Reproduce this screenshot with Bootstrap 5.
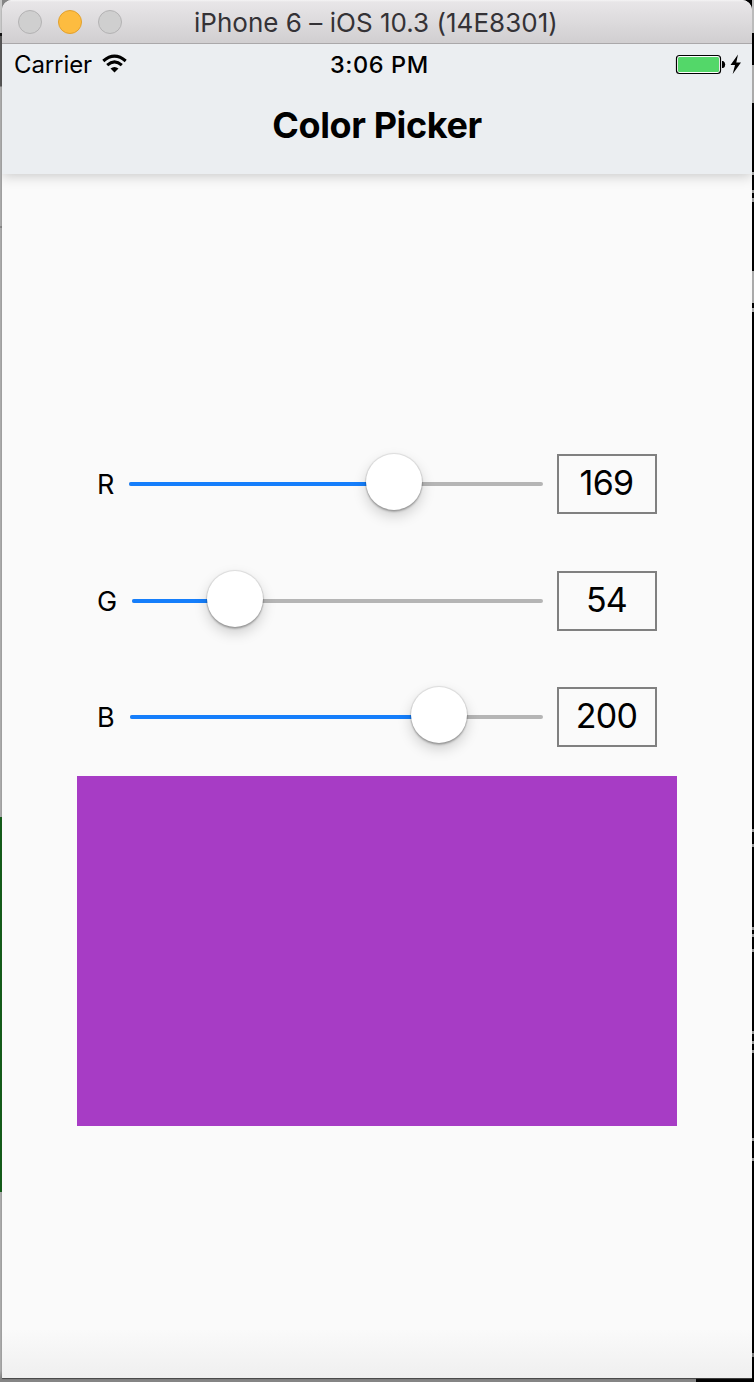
<!DOCTYPE html>
<html lang="en">
<head>
<meta charset="utf-8">
<meta name="viewport" content="width=device-width, initial-scale=1">
<title>Color Picker</title>
<link href="https://cdn.jsdelivr.net/npm/bootstrap@5.3.0/dist/css/bootstrap.min.css" rel="stylesheet">
<style>
  body { font-family: Inter, "Liberation Sans", sans-serif; color: #000; height: 1382px;
    background: linear-gradient(90deg, #858585 696px, #000 696px); line-height: 1; }
  .desk-edge { width: 2px; flex: none; }
  .edge-left { background: linear-gradient(#c8c8c8 33px, #111 33px 36px, #555 36px 86px, #aaa 87px 226px, #888 226px 228px, #aaa 228px 817px, #125c18 817px 1192px, #aaa 1192px 1370px, #858585 1378px); }
  .edge-right { background: linear-gradient(#bbb 33px, #000 33px 65px, #aaa 65px 103px, #000 103px 172px, #aaa 172px 175px, #000 175px 190px, #999 190px 193px, #000 193px 198px, #999 198px 202px, #000 202px 271px, #aaa 271px 303px, #000 303px 308px, #aaa 308px 312px, #000 312px 829px, #999 829px 832px, #000 832px 844px, #999 844px 847px, #000 847px 927px, #999 927px 930px, #000 930px 934px, #999 934px 937px, #000 937px 949px, #999 949px 952px, #000 952px 1031px, #999 1031px 1034px, #000 1034px 1041px, #999 1041px 1044px, #000 1044px 1050px, #999 1050px 1053px, #000 1053px 1138px, #999 1138px 1141px, #000 1141px 1158px, #999 1158px 1161px, #000 1161px 1353px, #777 1353px 1357px, #000 1357px); }
  .sim-window { width: 750px; height: 1378px; border-radius: 10px 10px 0 0; background: linear-gradient(#fafafa 1330px, #efefef 1378px); box-shadow: 0 1px 1px #444; }
  .title-bar { height: 44px; background: linear-gradient(#f5f4f5 0, #e8e6e8 2px, #d1cfd1 42px); border-bottom: 1px solid #aaa8aa; padding-left: 16px; }
  .light { width: 24px; height: 24px; border-radius: 50%; background: #cfcfcf; border: 1px solid #b3b2b3; }
  .light-min { background: #fdbc40; border-color: #e1a02e; }
  .window-name { font-size: 26px; color: #343236; letter-spacing: .02px; margin-left: 72px; padding-top: 3px; white-space: nowrap; }
  .app-head { height: 130px; background: #ebeef1; box-shadow: 0 2px 12px rgba(0,0,0,.2); clip-path: inset(0 0 -30px 0); }
  .status-row { height: 40px; padding: 0 11px 0 12px; }
  .carrier { font-size: 24px; width: 77px; letter-spacing: -.1px; white-space: nowrap; padding-top: 2px; }
  .clock { font-size: 23.5px; font-weight: 500; letter-spacing: .6px; margin-left: 199px; padding-top: 2px; white-space: nowrap; }
  .app-title { font-size: 36px; font-weight: 700; letter-spacing: -.4px; height: 84px; }
  .picker { padding: 280px 95px 0 95px; }
  .channel { height: 60px; margin-bottom: 57px; }
  .channel + .channel { margin-bottom: 56px; }
  .channel:nth-child(3) { margin-bottom: 29px; }
  .channel-name { font-size: 27px; padding-top: 1px; }
  .track { height: 4px; border-radius: 2px; background: #b5b5b5; margin-right: 14px; }
  .track-fill { height: 4px; border-radius: 2px; background: #157efb; }
  .thumb { width: 56px; height: 56px; border-radius: 50%; background: #fff; top: -28px; margin-left: -28px;
    box-shadow: 0 0 1px 1px rgba(0,0,0,.1), 0 2px 2px rgba(0,0,0,.22), 0 6px 14px rgba(0,0,0,.18); }
  .value-box { width: 100px; height: 60px; border: 2px solid #808080; font-size: 34px; letter-spacing: -.7px; padding: 0 1px 3px 0; flex: none; }
  .swatch { width: 600px; height: 350px; margin-left: -20px; background: rgb(167,60,197); }
</style>
<script src="https://cdn.jsdelivr.net/npm/bootstrap@5.3.0/dist/js/bootstrap.bundle.min.js"></script>
</head>
<body class="d-flex overflow-hidden">
  <div class="desk-edge edge-left"></div>
  <main class="sim-window overflow-hidden">
    <header class="title-bar d-flex align-items-center">
      <div class="d-flex gap-3">
        <span class="light"></span><span class="light light-min"></span><span class="light"></span>
      </div>
      <div class="window-name">iPhone 6 – iOS 10.3 (14E8301)</div>
    </header>
    <section class="app-head">
      <div class="status-row d-flex align-items-center">
        <span class="carrier">Carrier</span>
        <svg class="ms-2 flex-shrink-0" width="32" height="24" viewBox="0 0 32 24" fill="none" stroke="#000">
          <path d="M4.300 9Q15.500-.8 26.700 9" stroke-width="3"/>
          <path d="M8.200 13.100Q15.500 6.700 22.800 13.100" stroke-width="3"/>
          <path d="M11.500 16.500Q15.500 13.300 19.500 16.500L15.500 20.500Z" fill="#000" stroke="none"/>
        </svg>
        <span class="clock">3:06 PM</span>
        <svg class="ms-auto flex-shrink-0" width="68" height="24" viewBox="673 52 68 24">
          <rect x="676.500" y="55.500" width="44" height="18" rx="3" fill="#fff" stroke="#000" stroke-width="1.200"/>
          <rect x="678" y="57" width="41" height="15" rx="1.500" fill="#53d769"/>
          <path d="M722 61h1.200q2 1 2 3.500t-2 3.500H722z"/>
          <path d="M738 54.500L730.500 65h4.500l-2.300 9L741 62.500h-4.700z"/>
        </svg>
      </div>
      <h1 class="app-title d-flex align-items-center justify-content-center m-0">Color Picker</h1>
    </section>
    <section class="picker">
      <div class="channel d-flex align-items-center">
        <label class="channel-name" style="width:32px">R</label>
        <div class="track flex-grow-1 position-relative"><div class="track-fill" style="width:64%"></div><div class="thumb position-absolute" style="left:265px"></div></div>
        <div class="value-box d-flex align-items-center justify-content-center">169</div>
      </div>
      <div class="channel d-flex align-items-center">
        <label class="channel-name" style="width:35px">G</label>
        <div class="track flex-grow-1 position-relative"><div class="track-fill" style="width:25%"></div><div class="thumb position-absolute" style="left:103px"></div></div>
        <div class="value-box d-flex align-items-center justify-content-center">54</div>
      </div>
      <div class="channel d-flex align-items-center">
        <label class="channel-name" style="width:33px">B</label>
        <div class="track flex-grow-1 position-relative"><div class="track-fill" style="width:75%"></div><div class="thumb position-absolute" style="left:309px"></div></div>
        <div class="value-box d-flex align-items-center justify-content-center">200</div>
      </div>
      <div class="swatch"></div>
    </section>
  </main>
  <div class="desk-edge edge-right"></div>
</body>
</html>
